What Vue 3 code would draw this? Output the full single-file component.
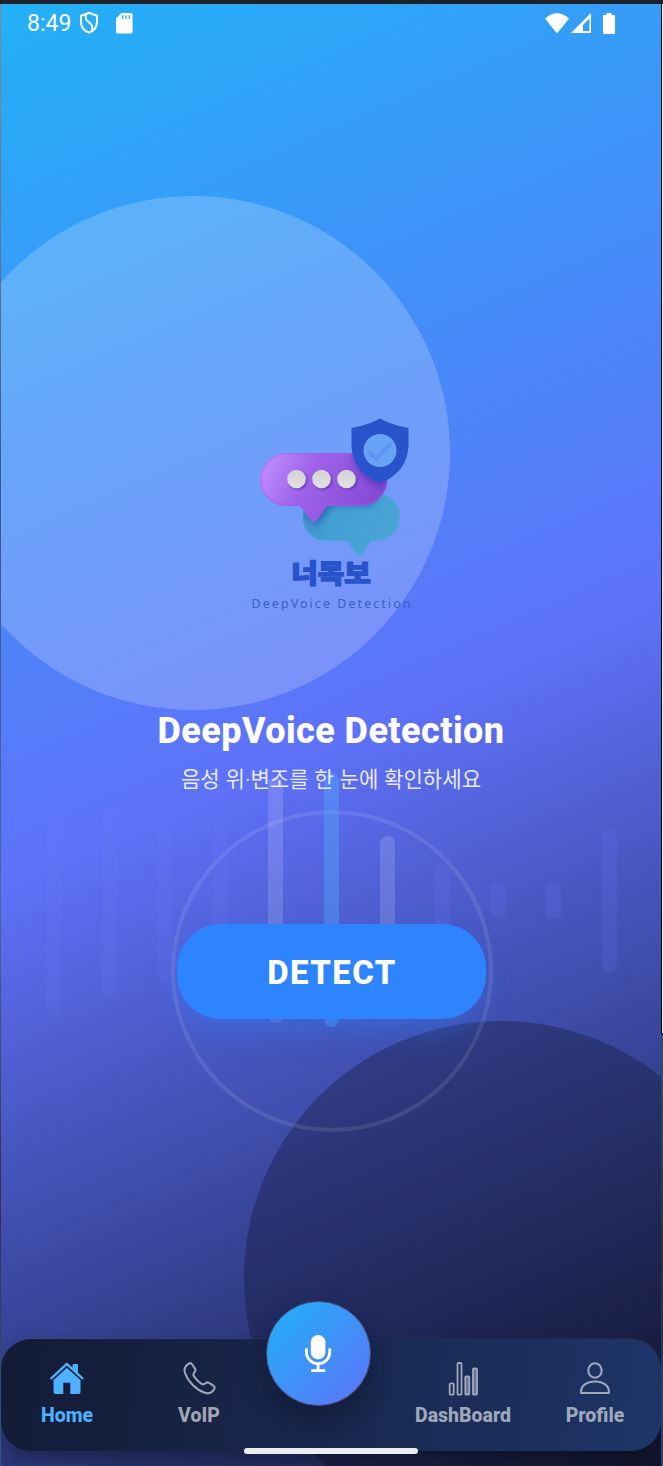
<script setup>
const wave = [
  { h: 232, tone: 'faint' },
  { h: 192, tone: 'faint' },
  { h: 163, tone: 'faint' },
  { h: 158, tone: 'faint' },
  { h: 246, tone: 'bright' },
  { h: 254, tone: 'accent' },
  { h: 128, tone: 'bright' },
  { h: 71, tone: 'faint' },
  { h: 33, tone: 'faint' },
  { h: 35, tone: 'faint' },
  { h: 143, tone: 'faint' },
]
const radius = (h) => `7.5px / ${Math.max(1, Math.min(8, h / 17))}px`
</script>

<template>
  <div class="frame">
    <div class="screen">
      <div class="orb light"></div>
      <div class="orb dark"></div>
      <div class="ring"></div>
      <div class="wave">
        <i v-for="(b, n) in wave" :key="n" :class="b.tone" :style="{ height: b.h + 'px', borderRadius: radius(b.h) }"></i>
      </div>

      <header class="status">
        <span class="time">8:49</span>
        <svg class="guard" width="20" height="24" viewBox="0 0 20 24" fill="none" stroke="#fff" stroke-width="2">
          <path d="M10 1.800 L18 4.800 V11 C18 16.500 14.500 20 10 21.600 C5.500 20 2 16.500 2 11 V4.800 Z" />
          <path d="M7.500 3 C5.500 7 7 9 10 11.300 C13.500 14 14.500 17 12.500 20.500" />
        </svg>
        <svg class="sd" width="17" height="21" viewBox="0 0 17 21">
          <path d="M5.500 0 H15 Q16.500 0 16.500 1.500 V19 Q16.500 20.500 15 20.500 H1.500 Q0 20.500 0 19 V5.500 Z" fill="#fff" />
          <path d="M6.700 2.300 V6 M10 2.300 V6 M13.300 2.300 V6" stroke="#3fb2f8" stroke-width="1.500" />
        </svg>
        <span class="grow"></span>
        <svg class="wifi" width="24" height="21" viewBox="0 0 24 21"><path d="M0 5.500 Q12 -5 24 5.500 L12 20.500 Z" fill="#fff" /></svg>
        <svg class="cell" width="20" height="20" viewBox="0 0 20 20">
          <path fill-rule="evenodd" d="M20 0 V20 H0 Z M18.400 5.500 L12 12 V18 H18.400 Z" fill="#fff" />
        </svg>
        <svg class="battery" width="12" height="21" viewBox="0 0 12 21"><path d="M3.500 0 H8.500 V2 H11 Q12 2 12 3 V20 Q12 21 11 21 H1 Q0 21 0 20 V3 Q0 2 1 2 H3.500 Z" fill="#fff" /></svg>
      </header>

      <main class="hero">
        <svg class="logo" width="190" height="220" viewBox="0 0 190 220">
          <defs>
            <linearGradient id="violet" x1="0" y1="0.300" x2="1" y2="0.600">
              <stop offset="0" stop-color="#bd8dfc" />
              <stop offset="0.350" stop-color="#a062ea" />
              <stop offset="1" stop-color="#8148d2" />
            </linearGradient>
            <linearGradient id="teal" x1="0" y1="0" x2="1" y2="0.300">
              <stop offset="0" stop-color="#3f86c4" />
              <stop offset="0.400" stop-color="#429fd3" />
              <stop offset="1" stop-color="#4aa4d6" />
            </linearGradient>
            <linearGradient id="dot" x1="0" y1="0" x2="0" y2="1">
              <stop offset="0" stop-color="#d2d1d6" />
              <stop offset="1" stop-color="#e2e1e2" />
            </linearGradient>
            <filter id="soft" x="-30%" y="-30%" width="160%" height="160%" color-interpolation-filters="sRGB"><feGaussianBlur stdDeviation="3" /></filter>
            <filter id="tiny" x="-30%" y="-30%" width="160%" height="160%" color-interpolation-filters="sRGB"><feGaussianBlur stdDeviation="1.200" /></filter>
            <clipPath id="tealShape"><path d="M86 93 H136 A23.500 23.500 0 0 1 136 141 H131 L121 155 Q119 157.500 117 155 L107 141 H86 A23.500 24 0 0 1 86 93 Z" /></clipPath>
            <clipPath id="violetShape"><path d="M46 53 H121 A26 26 0 0 1 121 106 H87 L77 120 Q74 123.500 71 120 L60 106 H46 A26 26.500 0 0 1 46 53 Z" /></clipPath>
          </defs>
          <g clip-path="url(#tealShape)">
            <rect x="60" y="90" width="102" height="70" fill="url(#teal)" />
            <path d="M46 56 H126 Q150 80 132 106 H92 L77 126 L62 110 Z" fill="#235fa8" opacity="0.750" filter="url(#soft)" />
            <path d="M86 93 H136 A23.500 23.500 0 0 1 136 141 H131 L119 157 L107 141 H86 A23.500 24 0 0 1 86 93 Z" fill="none" stroke="#4ab5d8" stroke-width="1.600" opacity="0.700" filter="url(#tiny)" />
          </g>
          <g clip-path="url(#violetShape)">
            <rect x="20" y="50" width="130" height="75" fill="url(#violet)" />
            <path d="M110 30 L112 58 Q119 79 142 89 L165 60 Z" fill="#5232b7" opacity="0.650" filter="url(#soft)" />
            <path d="M46 53 H121 A26 26 0 0 1 121 106 H87 L74 122 L60 106 H46 A26 26.500 0 0 1 46 53 Z" fill="none" stroke="#a55bed" stroke-width="2" opacity="0.800" filter="url(#tiny)" />
          </g>
          <g fill="#57309f" opacity="0.600" filter="url(#tiny)"><circle cx="58" cy="80.500" r="9.500" /><circle cx="83" cy="80.500" r="9.500" /><circle cx="108" cy="80.500" r="9.500" /></g>
          <g fill="url(#dot)"><circle cx="56.500" cy="79" r="9.300" /><circle cx="81.500" cy="79" r="9.300" /><circle cx="106.500" cy="79" r="9.300" /></g>
          <path d="M140 18.500 Q153 25.500 168.500 28 V45 C168 64 157 77 140 83 C123 77 112 64 111.500 45 V28 Q127 25.500 140 18.500 Z" fill="#2953ca" />
          <circle cx="140" cy="50.500" r="16.500" fill="#68a3f6" />
          <path d="M128.500 51.500 L136 59 L151.500 43" fill="none" stroke="#6095f6" stroke-width="4" />
          <text class="brand" transform="translate(91 182.500) scale(1.110 1)" x="0" y="0" text-anchor="middle">너목보</text>
          <text class="tag" x="11.500" y="208" textLength="161">DeepVoice Detection</text>
        </svg>
        <h1>DeepVoice Detection</h1>
        <p>음성 위<span class="mid">·</span>변조를 한 눈에 확인하세요</p>
        <button type="button">DETECT</button>
      </main>

      <nav>
        <a class="active">
          <svg width="34" height="34" viewBox="0 0 34 34">
            <path d="M3.500 17 L16.800 4.700 L30.500 17 V30 Q30.500 32 28.500 32 H20.300 V20.700 H13.300 V32 H5.500 Q3.500 32 3.500 30 Z" fill="#4eb0ff" />
            <path d="M22.500 7 V3 Q22.500 2 23.500 2 H27 Q28 2 28 3 V12 Z" fill="#4eb0ff" />
            <path d="M3 17.400 L16.800 4.600 L31 17.400" fill="none" stroke="#172442" stroke-width="1.800" />
            <path d="M1.300 16.300 L16.800 1.800 L32.500 16.300" fill="none" stroke="#4eb0ff" stroke-width="2.300" stroke-linecap="round" stroke-linejoin="round" />
          </svg>
          <span>Home</span>
        </a>
        <a class="call">
          <svg width="34" height="34" viewBox="0 0 34 34" fill="none" stroke="#a0a5b4" stroke-width="2.100" stroke-linejoin="round">
            <path d="M6.500 1.800 C8 .8 9.300 1.200 10.200 2.500 L13 6.600 C13.800 8 13.500 9 12.500 10.200 C11.200 11.700 11 12.800 12 14.300 C13.900 17 16.500 19.800 19.500 21.800 C21 22.700 22 22.500 23.500 21.200 C24.700 20.200 26 20 27.200 20.900 L31.300 23.700 C32.700 24.700 33 26 32.100 27.300 C29.800 31 26.800 32.200 22.800 30.800 C14.500 28 6.200 19.800 3.200 11.500 C1.600 7.200 2.800 4.200 6.500 1.800 Z" />
          </svg>
          <span>VoIP</span>
        </a>
        <a class="mic">
          <svg width="28" height="38" viewBox="0 0 28 38" fill="none" stroke="#fff" stroke-width="2.800" stroke-linecap="round">
            <rect x="6.800" y="0" width="14.600" height="24.500" rx="7.300" fill="#fff" stroke="none" />
            <path d="M2.400 14.500 V17 A11.700 11.700 0 0 0 25.800 17 V14.500 M14.100 29 V35.500 M8.300 35.700 H20" />
          </svg>
        </a>
        <a>
          <svg width="34" height="34" viewBox="0 0 34 34" fill="#667392" stroke="#a0a8bb" stroke-width="1.800">
            <rect x="3.700" y="21.400" width="4" height="11.300" rx="1" fill="none" />
            <rect x="11.500" y="1" width="4" height="31.700" rx="1" fill="none" />
            <rect x="19.300" y="14.300" width="4" height="18.400" rx="1" />
            <rect x="27" y="6.500" width="4" height="26.200" rx="1" />
          </svg>
          <span>DashBoard</span>
        </a>
        <a>
          <svg width="34" height="34" viewBox="0 0 34 34" fill="none" stroke="#a0a8bb" stroke-width="2.100" stroke-linejoin="round">
            <ellipse cx="17" cy="8.500" rx="6.700" ry="7.200" />
            <path d="M3.200 31 C2.200 24 8.500 19.500 17 19.500 C25.500 19.500 31.800 24 30.800 31 Z" />
          </svg>
          <span>Profile</span>
        </a>
      </nav>
      <div class="handle"></div>
    </div>
  </div>
</template>

<style>
body { margin: 0; background: #1b222a; }
</style>

<style scoped>
* { box-sizing: border-box; }
.frame {
  width: 663px;
  height: 1466px;
  padding: 4px 2px 0 1px;
  background:
    linear-gradient(#000, #000) 661px 4px / 1px 1030px no-repeat,
    linear-gradient(#eee, #eee) 662px 4px / 1px 1029px no-repeat,
    linear-gradient(#000, #000) 662px 1033px / 1px 1px no-repeat,
    linear-gradient(#36505f, #2c303b 50%, #34426a) 661px 1034px / 2px 432px no-repeat,
    linear-gradient(#7d858c 0 80px, #3c5790 480px, #456b93 900px, #2f3248 1200px, #34558a) 0 4px / 1px 1462px no-repeat,
    #1b222a;
  font-family: Roboto, "Noto Sans CJK KR", sans-serif;
  color: #fff;
}
.screen {
  position: relative;
  width: 660px;
  height: 1462px;
  overflow: hidden;
  display: flex;
  flex-direction: column;
  background: linear-gradient(156.500deg, #22b1f7 0%, #5f72fa 50%, #39469c 75%, #151a35 100%);
}
.orb { position: absolute; width: 514px; height: 514px; border-radius: 50%; }
.light { left: -65px; top: 192px; background: rgba(255, 255, 255, 0.2); }
.dark { left: 243px; top: 1017px; background: rgba(10, 14, 30, 0.3); }
.ring {
  position: absolute;
  left: 170px;
  top: 806px;
  width: 322px;
  height: 322px;
  border: 4px solid rgba(255, 255, 255, 0.1);
  border-radius: 50%;
}
.wave {
  position: absolute;
  left: 45px;
  top: 766px;
  width: 571px;
  height: 260px;
  display: flex;
  justify-content: space-between;
  align-items: center;
}
.wave i { width: 15px; }
.faint { background: rgba(108, 122, 245, 0.18); }
.bright { background: rgba(255, 255, 255, 0.15); }
.accent { background: rgba(79, 172, 254, 0.42); }

.status { position: relative; height: 38px; padding-left: 26px; padding-right: 46px; display: flex; align-items: center; }
.time { font-size: 23px; line-height: 38px; width: 45px; padding-top: 1px; }
.guard { margin-left: 7px; }
.sd { margin-left: 17px; }
.grow { flex: 1; }
.cell { margin-left: 2px; }
.battery { margin-left: 12px; }

.hero { position: relative; display: flex; flex-direction: column; align-items: center; padding-top: 358px; }
.logo { margin-left: 8px; }
.brand { font: 900 26px "Noto Sans CJK KR", sans-serif; fill: #2953ca; stroke: #2953ca; stroke-width: 1.400px; }
.tag { font: 12.500px "Noto Sans", sans-serif; fill: #3d5fc6; letter-spacing: 2px; }
h1 { margin: 89px 0 0; font-size: 36px; line-height: 44px; font-weight: 800; letter-spacing: 0.430px; white-space: nowrap; }
p { height: 32px; margin: 9px 0 0; font-family: "Noto Sans CJK KR", sans-serif; font-size: 21.100px; line-height: 32px; word-spacing: 1px; color: rgba(255, 255, 255, 0.88); white-space: nowrap; }
.mid { font-family: Roboto, sans-serif; line-height: 1; }
button {
  width: 309px;
  height: 95px;
  margin-top: 130px;
  padding: 2px 0 0 2px;
  border: 0;
  border-radius: 44px;
  background: #2e84ff;
  box-shadow: 0 14px 30px -4px rgba(46, 132, 255, 0.38);
  color: #fff;
  font: 800 33px Roboto, sans-serif;
  letter-spacing: 1.400px;
}

nav {
  position: absolute;
  left: 0;
  top: 1335px;
  width: 660px;
  height: 112px;
  border-radius: 30px;
  display: grid;
  grid-template-columns: repeat(5, 132px);
  background: linear-gradient(98deg, #131b35, #1e3568);
  box-shadow: 0 -1px 0 rgba(255, 255, 255, 0.04), 0 8px 16px rgba(0, 0, 0, 0.3);
}
nav a { display: flex; flex-direction: column; align-items: center; padding-top: 23px; color: #a0a8bb; }
nav .call { color: #a0a5b4; }
nav span { font-size: 19.500px; line-height: 24px; font-weight: 800; margin-top: 8px; }
nav .active { color: #4eb0ff; }
nav .mic {
  width: 105px;
  height: 105px;
  margin: -38.500px 0 0 0.500px;
  padding: 1px 0 0;
  justify-content: center;
  border: 1.500px solid #4a4c78;
  border-radius: 50%;
  background: linear-gradient(135deg, #1fb2f8, #5f72fa);
  box-shadow: 0 16px 26px rgba(12, 16, 34, 0.4);
}
.handle { position: absolute; left: 243px; top: 1444px; width: 174px; height: 6px; border-radius: 3px; background: #ecedf0; }
</style>
